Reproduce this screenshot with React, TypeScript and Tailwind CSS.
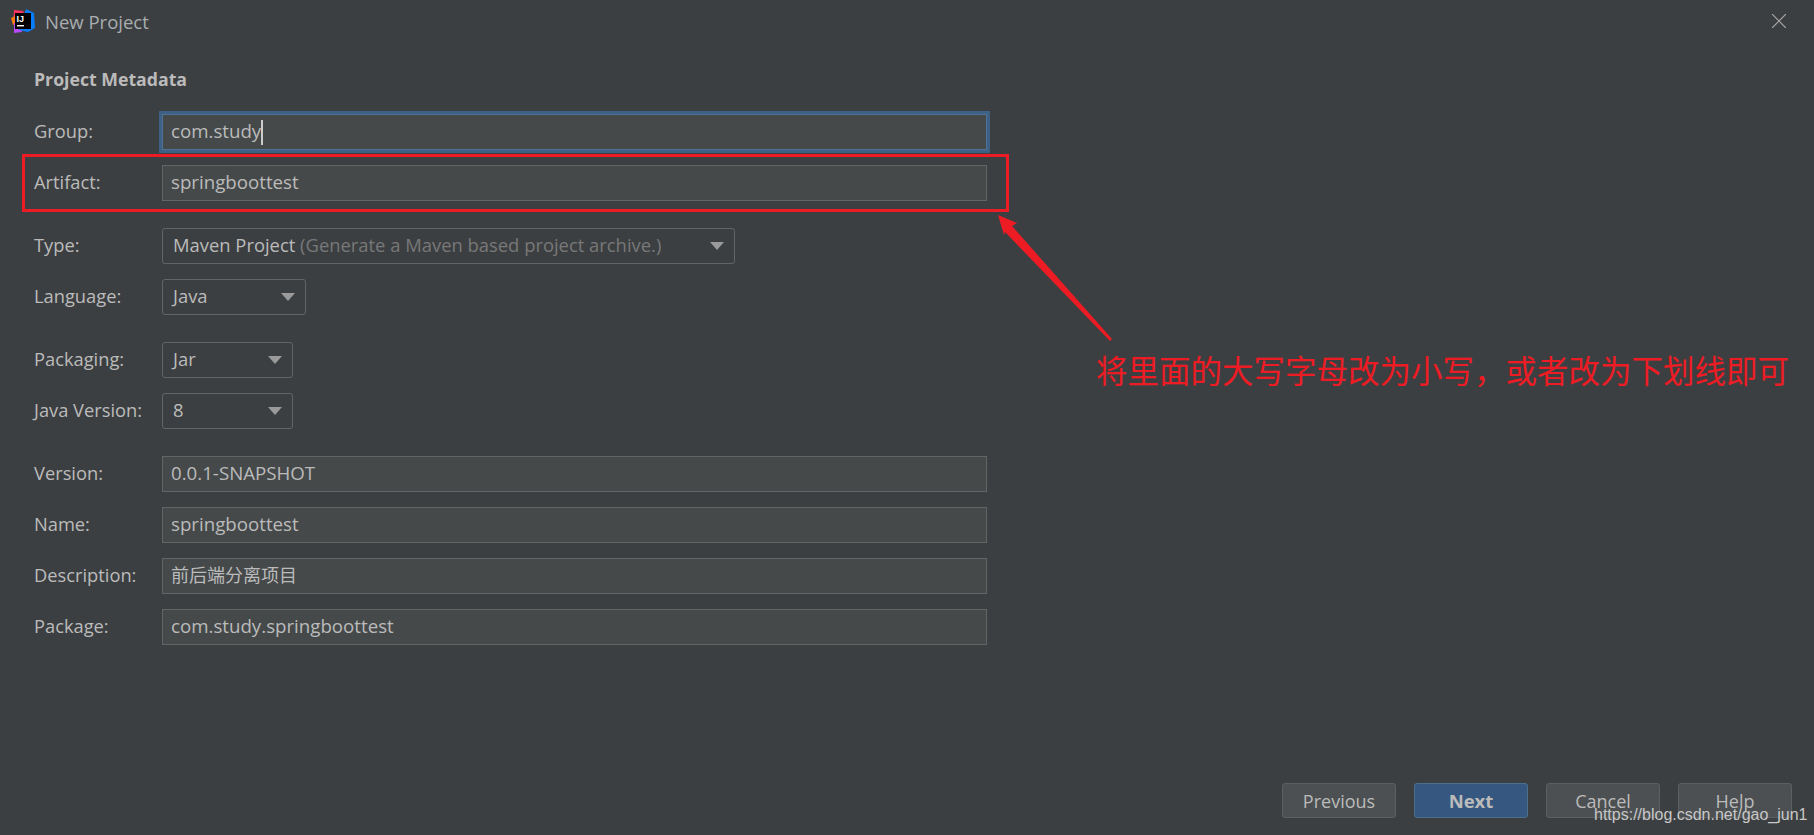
const labelFont = "font-['Open_Sans','Noto_Sans_CJK_SC',sans-serif]";

function Label({ children }: { children: string }) {
  return <span className="w-[128px] shrink-0 pb-[2px] text-[18.3px] text-[#bbbbbb]">{children}</span>;
}

function TextField({ label, value, className = '', cjk }: { label: string; value: string; className?: string; cjk?: boolean }) {
  return (
    <div className={`flex items-center h-9 ${className}`}>
      <Label>{label}</Label>
      <div
        className={`w-[825px] h-9 flex items-center px-2 pb-[2px] bg-[#45494a] border border-[#646464] text-[#bbbbbb] ${
          cjk ? 'text-[18px]' : 'text-[18.7px]'
        }`}
      >
        {value}
      </div>
    </div>
  );
}

function SelectField({ label, width, value, hint, className = '' }: { label: string; width: string; value: string; hint?: string; className?: string }) {
  return (
    <div className={`flex items-center h-9 ${className}`}>
      <Label>{label}</Label>
      <div className={`${width} h-9 flex items-center justify-between pl-[10px] pr-[10px] border border-[#646464] rounded-[3px] text-[18.4px] text-[#bbbbbb]`}>
        <span className="pb-[2px]">
          {value}
          {hint && <span className="text-[#787878]"> {hint}</span>}
        </span>
        <svg width="14" height="8" viewBox="0 0 14 8">
          <path d="M0 0h14L7 8z" fill="#9a9a9a" />
        </svg>
      </div>
    </div>
  );
}

function Button({ children, primary }: { children: string; primary?: boolean }) {
  return (
    <div
      className={`w-[114px] h-[35px] flex items-center justify-center pt-px rounded-[3px] border text-[#bbbbbb] ${
        primary ? 'bg-[#365880] border-[#4c708c] font-bold text-[18.5px]' : 'bg-[#4c5052] border-[#5e6060] text-[18px]'
      }`}
    >
      {children}
    </div>
  );
}

function Logo() {
  return (
    <svg width="24" height="24" viewBox="0 0 24 24">
      <path d="M3 1l9 1 3 6-9 8-4-2z" fill="#fe315d" />
      <path d="M0 9l6-3 1 8-5 2z" fill="#f97a12" />
      <path d="M3 14l7 2 1 7-8 1z" fill="#b74af7" />
      <path d="M15 0l8 4 1 15-7 4-9-2z" fill="#087cfa" />
      <rect x="4" y="4" width="16" height="16" fill="#000" />
      <rect x="6" y="16" width="7" height="1.4" fill="#fff" />
      <text x="5.6" y="12.6" fontSize="9" fontWeight="700" fill="#fff" fontFamily="Liberation Sans, sans-serif">
        IJ
      </text>
    </svg>
  );
}

export default function App() {
  return (
    <div className={`relative w-[1814px] h-[835px] overflow-hidden flex flex-col bg-[#3c3f41] ${labelFont}`}>
      {/* Title bar */}
      <div className="h-[42px] shrink-0 flex items-center justify-between pl-[11px] pr-[28px]">
        <div className="flex items-center gap-[10px]">
          <Logo />
          <span className="pt-px text-[18.5px] text-[#a8adb0]">New Project</span>
        </div>
        <svg width="14" height="14" viewBox="0 0 14 14" stroke="#a9a9a9" strokeWidth="1.2">
          <path d="M0 0l14 14M14 0L0 14" />
        </svg>
      </div>

      {/* Form */}
      <div className="flex-1 pl-[34px] pt-[25px]">
        <h1 className="h-6 leading-6 text-[17.7px] font-bold text-[#bbbbbb]">Project Metadata</h1>

        <div className="flex items-center h-9 mt-[23px]">
          <Label>Group:</Label>
          <div className="w-[825px] h-9 flex items-center px-2 bg-[#45494a] border border-[#4f7196] ring-[3px] ring-[#3d6185] text-[18.7px] text-[#bbbbbb]">
            <span className="pb-[2px]">com.study</span>
            <span className="w-[2px] h-[25px] bg-[#cccccc]" />
          </div>
        </div>
        <TextField label="Artifact:" value="springboottest" className="mt-[15px]" />

        <SelectField
          label="Type:"
          width="w-[573px]"
          value="Maven Project"
          hint="(Generate a Maven based project archive.)"
          className="mt-[27px]"
        />
        <SelectField label="Language:" width="w-[144px]" value="Java" className="mt-[15px]" />
        <SelectField label="Packaging:" width="w-[131px]" value="Jar" className="mt-[27px]" />
        <SelectField label="Java Version:" width="w-[131px]" value="8" className="mt-[15px]" />

        <TextField label="Version:" value="0.0.1-SNAPSHOT" className="mt-[27px]" />
        <TextField label="Name:" value="springboottest" className="mt-[15px]" />
        <TextField label="Description:" value="前后端分离项目" className="mt-[15px]" cjk />
        <TextField label="Package:" value="com.study.springboottest" className="mt-[15px]" />
      </div>

      {/* Footer */}
      <div className="shrink-0 flex justify-end gap-[18px] pr-[22px] pb-[17px]">
        <Button>Previous</Button>
        <Button primary>Next</Button>
        <Button>Cancel</Button>
        <Button>Help</Button>
      </div>

      {/* Annotations drawn over the dialog */}
      <div className="absolute left-[22px] top-[154px] w-[987px] h-[58px] border-[3px] border-[#ed1c24]" />
      <svg className="absolute left-0 top-0 pointer-events-none" width="1814" height="835">
        <path d="M998 215L1017 223L1012 226L1112 339L1110 341L1005 232L1004 235Z" fill="#ed1c24" />
      </svg>
      <span className="absolute left-[1096px] top-[346px] text-[31.5px] leading-[46px] whitespace-nowrap text-[#ed1c24] font-['Noto_Sans_CJK_SC',sans-serif]">
        将里面的大写字母改为小写，或者改为下划线即可
      </span>
      <span className="absolute left-[1594px] top-[806px] text-[16px] leading-[18px] whitespace-nowrap text-[#c8c8c8] font-['Liberation_Sans',sans-serif]">
        https://blog.csdn.net/gao_jun1
      </span>
    </div>
  );
}
